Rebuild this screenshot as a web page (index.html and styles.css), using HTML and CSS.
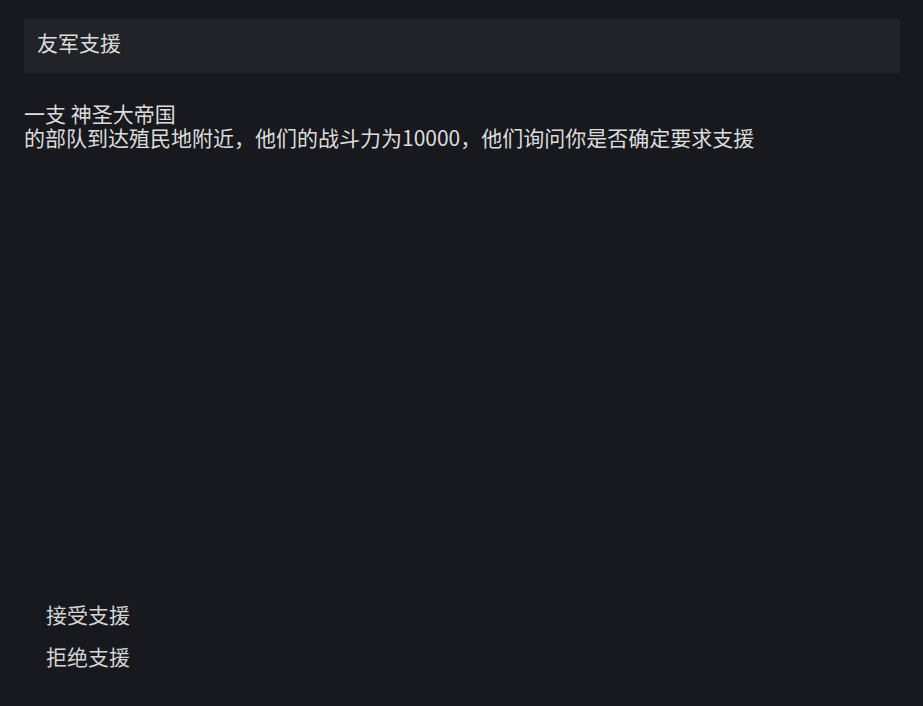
FILE: index.html
```html
<!DOCTYPE html>
<html lang="zh-CN">
<head>
<meta charset="utf-8">
<link rel="stylesheet" href="styles.css">
</head>
<body>
<div class="page">
  <div class="header">友军支援</div>
  <div class="message">
    <div>一支 神圣大帝国</div>
    <div>的部队到达殖民地附近，他们的战斗力为10000，他们询问你是否确定要求支援</div>
  </div>
  <div class="actions">
    <div class="action">接受支援</div>
    <div class="action">拒绝支援</div>
  </div>
</div>
</body>
</html>
```
FILE: styles.css
```css
html, body {
  margin: 0;
  padding: 0;
  background: #17191e;
}
body {
  font-family: "Noto Sans CJK SC", "Noto Sans", sans-serif;
  color: #dcdcdc;
}
.page {
  box-sizing: border-box;
  height: 706px;
  padding: 19px 23px 38px 24px;
  display: flex;
  flex-direction: column;
}
.header {
  box-sizing: border-box;
  background: #212328;
  height: 54px;
  padding: 8px 0 0 13px;
  font-size: 21px;
  line-height: 30px;
  color: #dcdcdc;
}
.message {
  margin-top: 28px;
  font-size: 21px;
  line-height: 24px;
}
.actions {
  margin-top: auto;
  display: flex;
  flex-direction: column;
  gap: 18px;
  padding-left: 22px;
}
.action {
  font-size: 21px;
  line-height: 24px;
  color: #d4d4d4;
}
```
